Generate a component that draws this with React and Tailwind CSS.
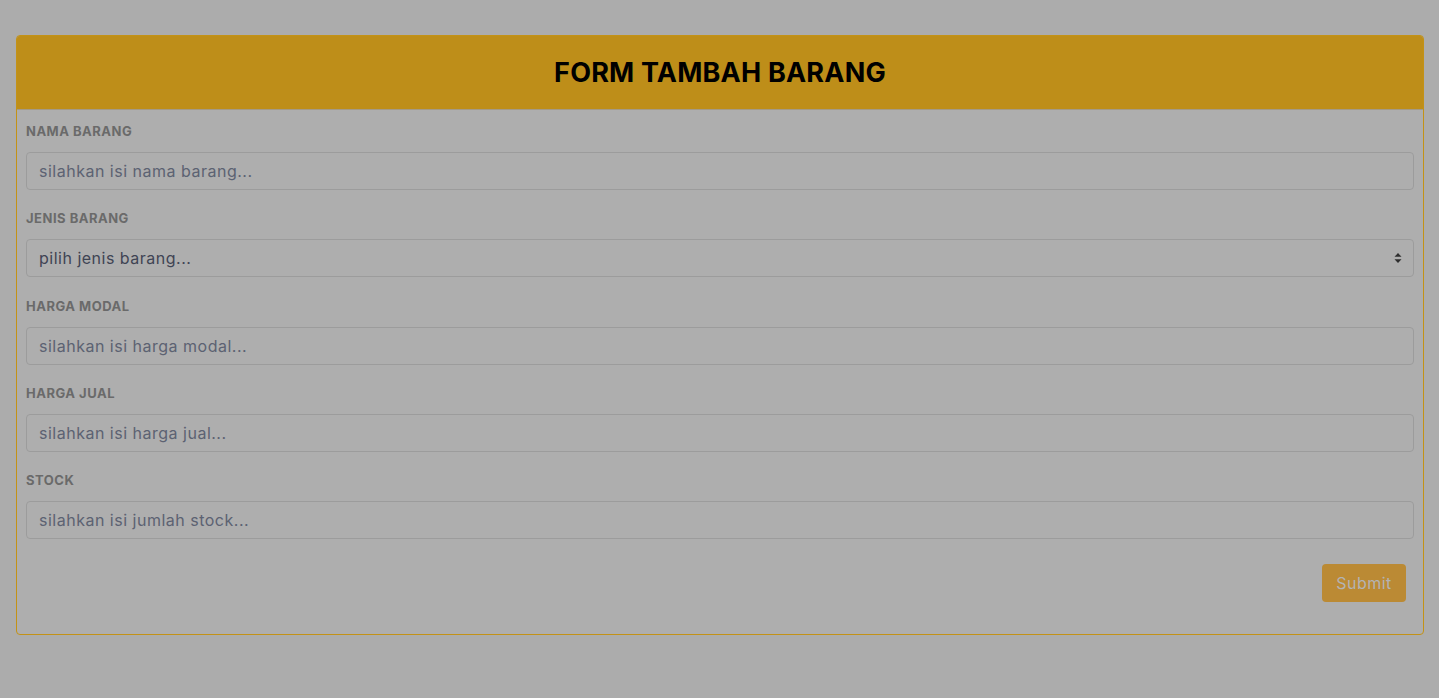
import React, { useState } from "react";

const fields = [
    { label: "NAMA BARANG", placeholder: "silahkan isi nama barang..." },
    { label: "JENIS BARANG", select: true, placeholder: "pilih jenis barang..." },
    { label: "HARGA MODAL", placeholder: "silahkan isi harga modal..." },
    { label: "HARGA JUAL", placeholder: "silahkan isi harga jual..." },
    { label: "STOCK", placeholder: "silahkan isi jumlah stock..." },
];

const App = () => {
    const [jenis, setJenis] = useState("");

    return (
        <div className="min-h-[698px] bg-[#acacac] pt-[35px] pl-[16px] pr-[15px] font-['Inter',sans-serif]">
            <div className="border border-[#c39216] rounded-[4px] overflow-hidden bg-[#aeaeae]">
                {/* Header */}
                <div className="h-[74px] bg-[#be8e19] border-b border-[#a49a86] flex items-center justify-center">
                    <h1 className="text-[27px] font-bold text-black tracking-[0.2px] mt-[1px]">
                        FORM TAMBAH BARANG
                    </h1>
                </div>

                {/* Body */}
                <form className="px-[9px] pt-[12px] pb-[32px]" onSubmit={(e) => e.preventDefault()}>
                    {fields.map((f) => (
                        <div key={f.label} className="mb-[19.3px]">
                            <label className="block text-[13px] font-bold text-[#6a6a6a] leading-[18px] tracking-[0.5px] mb-[12px]">
                                {f.label}
                            </label>
                            {f.select ? (
                                <div className="relative">
                                    <select
                                        value={jenis}
                                        onChange={(e) => setJenis(e.target.value)}
                                        className="appearance-none w-full h-[38px] rounded-[4px] border border-[#9c9c9c] bg-transparent px-[12px] text-[16px] tracking-[0.5px] text-[#3f4454] outline-none"
                                    >
                                        <option value="">pilih jenis barang...</option>
                                        <option value="makanan">Makanan</option>
                                        <option value="minuman">Minuman</option>
                                    </select>
                                    <svg
                                        className="absolute right-[12px] top-1/2 -translate-y-1/2 pointer-events-none"
                                        width="8"
                                        height="11"
                                        viewBox="0 0 8 11"
                                    >
                                        <path d="M4 0.5 L7.5 4.3 H0.5 Z" fill="#2e2e2e" />
                                        <path d="M4 10.5 L7.5 6.7 H0.5 Z" fill="#2e2e2e" />
                                    </svg>
                                </div>
                            ) : (
                                <input
                                    type="text"
                                    placeholder={f.placeholder}
                                    className="w-full h-[38px] rounded-[4px] border border-[#9c9c9c] bg-transparent px-[12px] text-[16px] tracking-[0.5px] text-[#3f4454] placeholder:text-[#5c6272] outline-none"
                                />
                            )}
                        </div>
                    ))}

                    <div className="flex justify-end mt-[25px] pr-[8px]">
                        <button
                            type="submit"
                            className="h-[38px] w-[84px] rounded-[4px] bg-[#bb8a34] text-[#b3b3b3] text-[16px] tracking-[0.5px]"
                        >
                            Submit
                        </button>
                    </div>
                </form>
            </div>
        </div>
    );
};

export default App;
